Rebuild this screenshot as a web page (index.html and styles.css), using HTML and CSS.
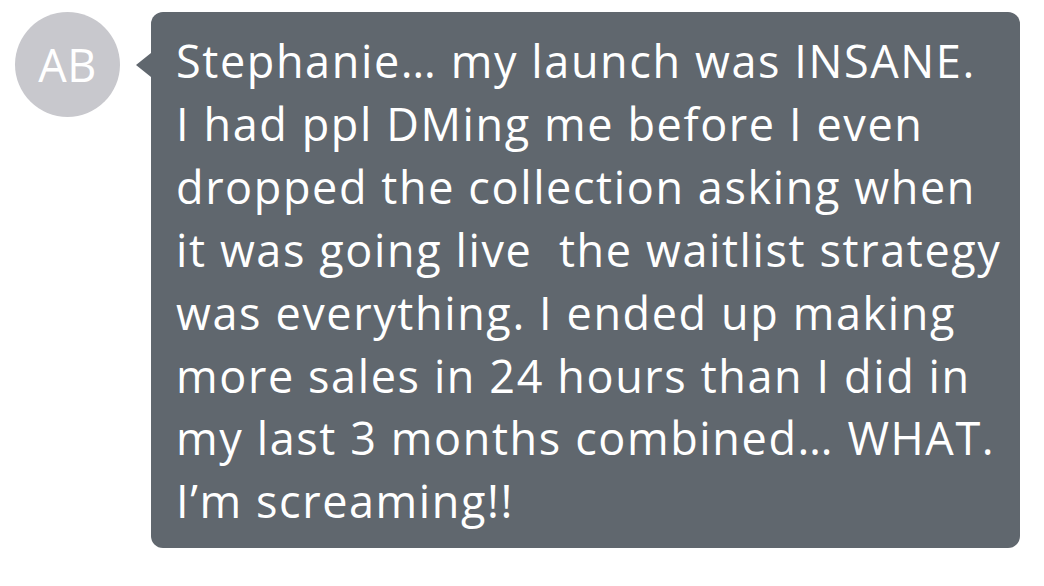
FILE: index.html
```html
<!DOCTYPE html>
<html>
<head>
<meta charset="utf-8">
<link rel="stylesheet" href="styles.css">
</head>
<body>
<div class="row">
  <div class="avatar">AB</div>
  <div class="bubble">
    <p class="msg">Stephanie… my launch was INSANE.<br>I had ppl DMing me before I even<br>dropped the collection asking when<br>it was going live&nbsp; the waitlist strategy<br>was everything. I ended up making<br>more sales in 24 hours than I did in<br>my last 3 months combined… WHAT.<br>I’m screaming!!</p>
  </div>
</div>
</body>
</html>
```
FILE: styles.css
```css
html, body {
  margin: 0;
  padding: 0;
  background: #ffffff;
}
body {
  font-family: "Open Sans", "Noto Sans", sans-serif;
  -webkit-font-smoothing: antialiased;
}
.row {
  display: flex;
  align-items: flex-start;
  gap: 31px;
  padding: 12px 0 0 15px;
}
.avatar {
  flex: none;
  width: 105px;
  height: 105px;
  border-radius: 50%;
  background: #c8c8cd;
  color: #ffffff;
  font-size: 45px;
  display: flex;
  align-items: center;
  justify-content: center;
  letter-spacing: 0.5px;
}
.bubble {
  position: relative;
  flex: none;
  width: 869px;
  height: 536px;
  box-sizing: border-box;
  background: #60676e;
  border-radius: 12px;
  padding: 18px 0 0 25px;
}
.bubble::before {
  content: "";
  position: absolute;
  left: -15px;
  top: 41px;
  width: 0;
  height: 0;
  border-top: 12px solid transparent;
  border-bottom: 12px solid transparent;
  border-right: 15px solid #60676e;
}
.msg {
  margin: 0;
  color: #ffffff;
  font-size: 45px;
  line-height: 62.9px;
  letter-spacing: 1.6px;
  white-space: nowrap;
}
```
